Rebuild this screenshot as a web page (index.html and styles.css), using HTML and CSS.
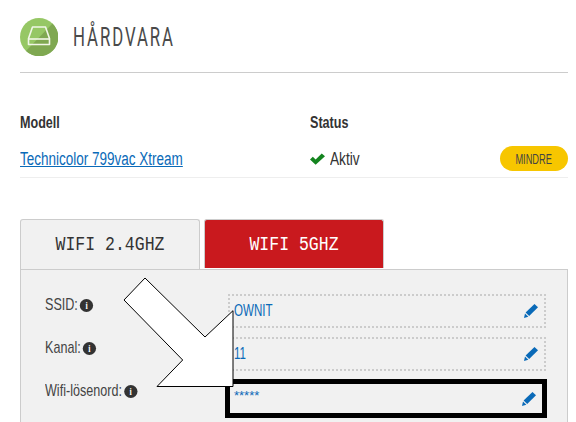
FILE: index.html
```html
<!DOCTYPE html>
<html lang="en">
<head>
  <meta charset="UTF-8">
  <title>Hårdvara</title>
  <link rel="stylesheet" href="styles.css">
</head>
<body>
  <div class="container">
    <header class="page-head">
      <svg class="logo" viewBox="0 0 38 38" aria-hidden="true">
        <circle cx="19" cy="19" r="19" fill="#96c765"/>
        <path d="M32.5 5.5A19 19 0 0 1 6 33z" fill="#7fa851"/>
        <path d="M8.5 20.5 12.5 9h13l4 11.5V26.5h-21z" fill="none" stroke="#f1f6e8" stroke-width="1.6" stroke-linejoin="round"/>
        <path d="M8.5 21h21" stroke="#f1f6e8" stroke-width="1.6"/>
      </svg>
      <h2>HÅRDVARA</h2>
    </header>

    <section class="device">
      <div class="device-col model">
        <h3>Modell</h3>
        <a href="#">Technicolor 799vac Xtream</a>
      </div>
      <div class="device-col status">
        <h3>Status</h3>
        <div class="active">
          <svg class="check" viewBox="0 0 16 12" aria-hidden="true"><path d="M0 6.5 3 3.5 6 6.5 12.5 0 16 3 6 12z" fill="#14841f"/></svg>
          <span>Aktiv</span>
        </div>
      </div>
      <button class="less"><span>MINDRE</span></button>
    </section>

    <nav class="tabs">
      <div class="tab current"><span>WIFI 2.4GHZ</span></div>
      <div class="tab other"><span>WIFI 5GHZ</span></div>
    </nav>

    <div class="panel">
      <div class="row">
        <label>SSID: <span class="info">i</span></label>
        <div class="value"><span class="val-text">OWNIT</span>
          <svg class="pen" viewBox="0 0 14 14" aria-hidden="true"><use href="#pen"/></svg>
        </div>
      </div>
      <div class="row">
        <label>Kanal: <span class="info">i</span></label>
        <div class="value"><span class="val-text">11</span>
          <svg class="pen" viewBox="0 0 14 14" aria-hidden="true"><use href="#pen"/></svg>
        </div>
      </div>
      <div class="row highlighted">
        <label>Wifi-lösenord: <span class="info">i</span></label>
        <div class="value secret"><span class="stars">*****</span>
          <svg class="pen" viewBox="0 0 14 14" aria-hidden="true"><use href="#pen"/></svg>
        </div>
      </div>
    </div>
  </div>

  <!-- annotation arrow on top of the form -->
  <svg class="arrow" viewBox="0 0 576 422" aria-hidden="true">
    <path d="M145 278 124 300 182.7 360 157 386.5H233V310.7L205 337z" fill="#fff" stroke="#000" stroke-width="1"/>
  </svg>

  <svg width="0" height="0" class="defs">
    <defs>
      <g id="pen">
        <path d="M10.5 0 14 3.2 5.2 12 1.6 8.6z" fill="#0a6ab8"/>
        <path d="M1 9.6 4.3 12.8 0 14z" fill="#0a6ab8"/>
      </g>
    </defs>
  </svg>
</body>
</html>
```

FILE: styles.css
```css
html, body {
  height: 100%;
  overflow: hidden;
}
body {
  margin: 0;
  background: #fff;
  color: #333;
  font-family: "Liberation Sans", Arial, sans-serif;
}
.container {
  padding: 18px 8px 0 20px;
}
.page-head {
  display: flex;
  gap: 15px;
  height: 54px;
  align-items: flex-start;
  border-bottom: 1px solid #ccc;
}
.logo {
  width: 38px;
  height: 38px;
}
.page-head h2 {
  margin: 4px 0 0 0;
  font-family: "Roboto", sans-serif;
  font-weight: 400;
  font-size: 26px;
  line-height: 30px;
  letter-spacing: 3px;
  color: #4a4a4a;
  transform: scaleX(0.645);
  transform-origin: left;
}
.device {
  display: flex;
  align-items: flex-end;
  height: 68px;
  margin-top: 37px;
  padding-bottom: 8px;
  box-sizing: border-box;
  border-bottom: 1px solid #eee;
}
.device-col h3 {
  margin: 0 0 16px 0;
  font-size: 17px;
  line-height: 20px;
  font-weight: 700;
  color: #333;
  transform: scaleX(0.74);
  transform-origin: left;
}
.model {
  width: 290px;
}
.model a {
  display: block;
  font-size: 18px;
  line-height: 20px;
  color: #0a6ab8;
  text-decoration: underline;
  white-space: nowrap;
  transform: scaleX(0.75);
  transform-origin: left;
}
.status {
  width: 190px;
}
.active {
  display: flex;
  align-items: center;
  gap: 5px;
  font-size: 18px;
  line-height: 20px;
  color: #333;
}
.active span {
  transform: scaleX(0.76);
  transform-origin: left;
}
.check {
  width: 15px;
  height: 12px;
}
.less {
  width: 68px;
  height: 25px;
  margin-bottom: -2px;
  border: none;
  border-radius: 13px;
  background: #f7c600;
  color: #444;
  font-family: inherit;
  font-size: 14px;
  padding: 0;
}
.less span {
  display: inline-block;
  transform: scaleX(0.66);
}
.tabs {
  display: flex;
  gap: 4px;
  margin-top: 41px;
}
.tab {
  width: 180px;
  height: 49px;
  box-sizing: border-box;
  border: 1px solid #ccc;
  border-bottom: none;
  border-radius: 3px 3px 0 0;
  text-align: center;
  font-family: "Liberation Mono", monospace;
  font-size: 20px;
  line-height: 50px;
}
.tab span {
  display: inline-block;
  transform: scaleX(0.825);
}
.tab.current {
  background: #f1f1f1;
  color: #333;
  height: 50px;
  position: relative;
  z-index: 1;
}
.tab.other {
  background: #c9191e;
  color: #fff;
}
.panel {
  background: #f1f1f1;
  border: 1px solid #ccc;
  padding: 24px 21px 0 24px;
  height: 160px;
  box-sizing: border-box;
}
.row {
  display: flex;
  align-items: flex-start;
  height: 34px;
  margin-bottom: 9px;
}
.row label {
  width: 183px;
  flex: none;
  font-size: 17px;
  line-height: 22px;
  color: #444;
  white-space: nowrap;
  transform: scaleX(0.74);
  transform-origin: left;
}
/* wider than tall: the label scale squeezes it back to a circle */
.info {
  display: inline-block;
  width: 18px;
  height: 13px;
  margin-left: -2px;
  vertical-align: 1px;
  border-radius: 50%;
  background: #333;
  color: #fff;
  font-family: "Liberation Serif", serif;
  font-weight: 700;
  font-size: 11px;
  line-height: 13px;
  text-align: center;
}
.value {
  flex: 1;
  height: 34px;
  box-sizing: border-box;
  border: 2px dotted #ccc;
  padding: 0 6px 0 4px;
  display: flex;
  align-items: center;
  justify-content: space-between;
  font-size: 17px;
  color: #0a6ab8;
}
.val-text {
  transform: scaleX(0.68);
  transform-origin: left;
}
.highlighted .value {
  flex: none;
  width: 322px;
  height: 39px;
  margin: -1px -2px 0 -3px;
  border: 5px solid #000;
  padding: 0 6px 0 4px;
  font-size: 13px;
}
.stars {
  margin-bottom: 6px;
}
.pen {
  width: 14px;
  height: 14px;
}
.arrow {
  position: absolute;
  left: 0;
  top: 0;
  width: 576px;
  height: 422px;
}
.defs {
  position: absolute;
}
```
